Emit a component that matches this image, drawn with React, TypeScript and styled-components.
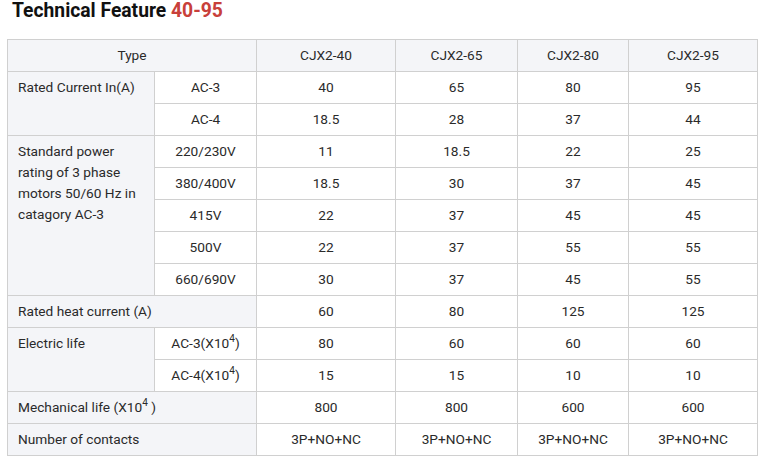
import React from "react";
import styled, { createGlobalStyle } from "styled-components";

const Global = createGlobalStyle`
  html, body { margin: 0; padding: 0; background: #ffffff; }
  body { font-family: Roboto, "Liberation Sans", Arial, sans-serif; }
`;

const Page = styled.div`
  padding: 0 0 0 7px;
`;

const Title = styled.h2`
  margin: 0;
  padding: 0 0 0 5px;
  height: 39px;
  box-sizing: border-box;
  font-family: Roboto, "Liberation Sans", Arial, sans-serif;
  font-weight: 700;
  font-size: 19.3px;
  line-height: 22px;
  color: #111111;
`;

const Accent = styled.span`
  color: #c8403a;
`;

const Table = styled.table`
  border-collapse: collapse;
  table-layout: fixed;
  width: 750px;
  font-size: 13.7px;
  color: #2a2a2a;
`;

const Col = styled.col<{ $w: number }>`
  width: ${(p) => p.$w}px;
`;

const Cell = styled.td<{ $label?: boolean; $align?: "left" | "center"; $top?: boolean }>`
  border: 1px solid #d0d0d0;
  height: 31px;
  box-sizing: border-box;
  padding: 5px 10px;
  line-height: 21px;
  white-space: normal;
  text-align: ${(p) => p.$align ?? "center"};
  vertical-align: ${(p) => (p.$top ? "top" : "middle")};
  background: ${(p) => (p.$label ? "#f4f5f8" : "#ffffff")};
`;

const HeadCell = styled.th`
  border: 1px solid #d0d0d0;
  height: 31px;
  box-sizing: border-box;
  padding: 5px 10px;
  line-height: 21px;
  font-weight: 400;
  text-align: center;
  background: #f4f5f8;
`;

const Sup = styled.sup`
  font-size: 10px;
  line-height: 0;
  vertical-align: 6px;
`;

const models = ["CJX2-40", "CJX2-65", "CJX2-80", "CJX2-95"];
const colWidths = [147, 102, 139, 122, 111, 129];

const X104 = () => (
  <>
    (X10<Sup>4</Sup>)
  </>
);

type Group = {
  label: React.ReactNode;
  rows: { sub?: React.ReactNode; values: string[] }[];
};

const groups: Group[] = [
  {
    label: "Rated Current In(A)",
    rows: [
      { sub: "AC-3", values: ["40", "65", "80", "95"] },
      { sub: "AC-4", values: ["18.5", "28", "37", "44"] },
    ],
  },
  {
    label: "Standard power rating of 3 phase motors 50/60 Hz in catagory AC-3",
    rows: [
      { sub: "220/230V", values: ["11", "18.5", "22", "25"] },
      { sub: "380/400V", values: ["18.5", "30", "37", "45"] },
      { sub: "415V", values: ["22", "37", "45", "45"] },
      { sub: "500V", values: ["22", "37", "55", "55"] },
      { sub: "660/690V", values: ["30", "37", "45", "55"] },
    ],
  },
  {
    label: "Rated heat current (A)",
    rows: [{ values: ["60", "80", "125", "125"] }],
  },
  {
    label: "Electric life",
    rows: [
      { sub: <>AC-3<X104 /></>, values: ["80", "60", "60", "60"] },
      { sub: <>AC-4<X104 /></>, values: ["15", "15", "10", "10"] },
    ],
  },
  {
    label: (
      <>
        Mechanical life (X10<Sup>4</Sup> )
      </>
    ),
    rows: [{ values: ["800", "800", "600", "600"] }],
  },
  {
    label: "Number of contacts",
    rows: [{ values: ["3P+NO+NC", "3P+NO+NC", "3P+NO+NC", "3P+NO+NC"] }],
  },
];

export default function App() {
  return (
    <Page>
      <Global />
      <Title>
        Technical Feature <Accent>40-95</Accent>
      </Title>
      <Table>
        <colgroup>
          {colWidths.map((w, i) => (
            <Col key={i} $w={w} />
          ))}
        </colgroup>
        <thead>
          <tr>
            <HeadCell colSpan={2}>Type</HeadCell>
            {models.map((m) => (
              <HeadCell key={m}>{m}</HeadCell>
            ))}
          </tr>
        </thead>
        <tbody>
          {groups.map((g, gi) =>
            g.rows.map((r, ri) => (
              <tr key={`${gi}-${ri}`}>
                {ri === 0 && (
                  <Cell
                    $label
                    $align="left"
                    $top
                    rowSpan={g.rows.length}
                    colSpan={r.sub ? 1 : 2}
                  >
                    {g.label}
                  </Cell>
                )}
                {r.sub && <Cell>{r.sub}</Cell>}
                {r.values.map((v, vi) => (
                  <Cell key={vi}>{v}</Cell>
                ))}
              </tr>
            ))
          )}
        </tbody>
      </Table>
    </Page>
  );
}
